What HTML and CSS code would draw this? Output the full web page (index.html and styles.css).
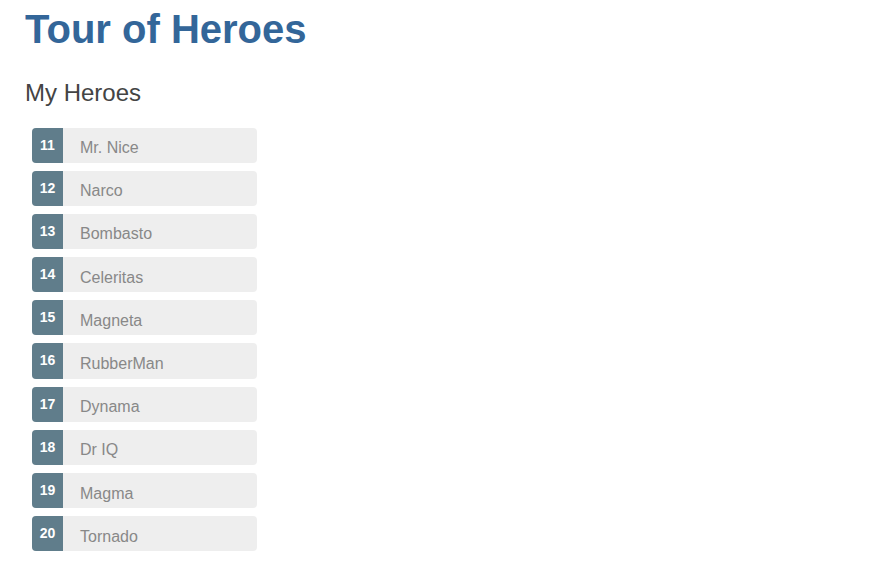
FILE: index.html
```html
<!DOCTYPE html>
<html>
<head>
<meta charset="utf-8">
<title>Tour of Heroes</title>
<link rel="stylesheet" href="styles.css">
</head>
<body>
<h1 class="title">Tour of Heroes</h1>
<h2 class="subtitle">My Heroes</h2>
<ul class="heroes">
  <li class="hero"><span class="badge">11</span><span class="text">Mr. Nice</span></li>
  <li class="hero"><span class="badge">12</span><span class="text">Narco</span></li>
  <li class="hero"><span class="badge">13</span><span class="text">Bombasto</span></li>
  <li class="hero"><span class="badge">14</span><span class="text">Celeritas</span></li>
  <li class="hero"><span class="badge">15</span><span class="text">Magneta</span></li>
  <li class="hero"><span class="badge">16</span><span class="text">RubberMan</span></li>
  <li class="hero"><span class="badge">17</span><span class="text">Dynama</span></li>
  <li class="hero"><span class="badge">18</span><span class="text">Dr IQ</span></li>
  <li class="hero"><span class="badge">19</span><span class="text">Magma</span></li>
  <li class="hero"><span class="badge">20</span><span class="text">Tornado</span></li>
</ul>
</body>
</html>
```
FILE: styles.css
```css
* {
  font-family: "Liberation Sans", Arial, Helvetica, sans-serif;
}
body {
  margin: 6px 25px;
  color: #888;
  background: #fff;
}
.title {
  color: #369;
  font-size: 40px;
  font-weight: bold;
  line-height: 46px;
  margin: 0 0 27px 0;
}
.subtitle {
  color: #444;
  font-size: 24px;
  font-weight: normal;
  line-height: 28px;
  margin: 0;
}
.heroes {
  list-style-type: none;
  padding: 0;
  margin: 20.5px 0 32px 7px;
  width: 225px;
  display: flex;
  flex-direction: column;
  gap: 8px;
}
.hero {
  display: flex;
  height: 35.2px;
  background-color: #EEE;
  border-radius: 4px;
}
.badge {
  width: 31px;
  flex: none;
  box-sizing: border-box;
  padding-top: 10px;
  text-align: center;
  font-size: 14px;
  font-weight: bold;
  line-height: 14px;
  color: #fff;
  background-color: #607D8B;
  border-radius: 4px 0 0 4px;
}
.text {
  padding: 12.5px 0 0 17px;
  font-size: 16px;
  line-height: 16px;
  color: #888;
}
```
